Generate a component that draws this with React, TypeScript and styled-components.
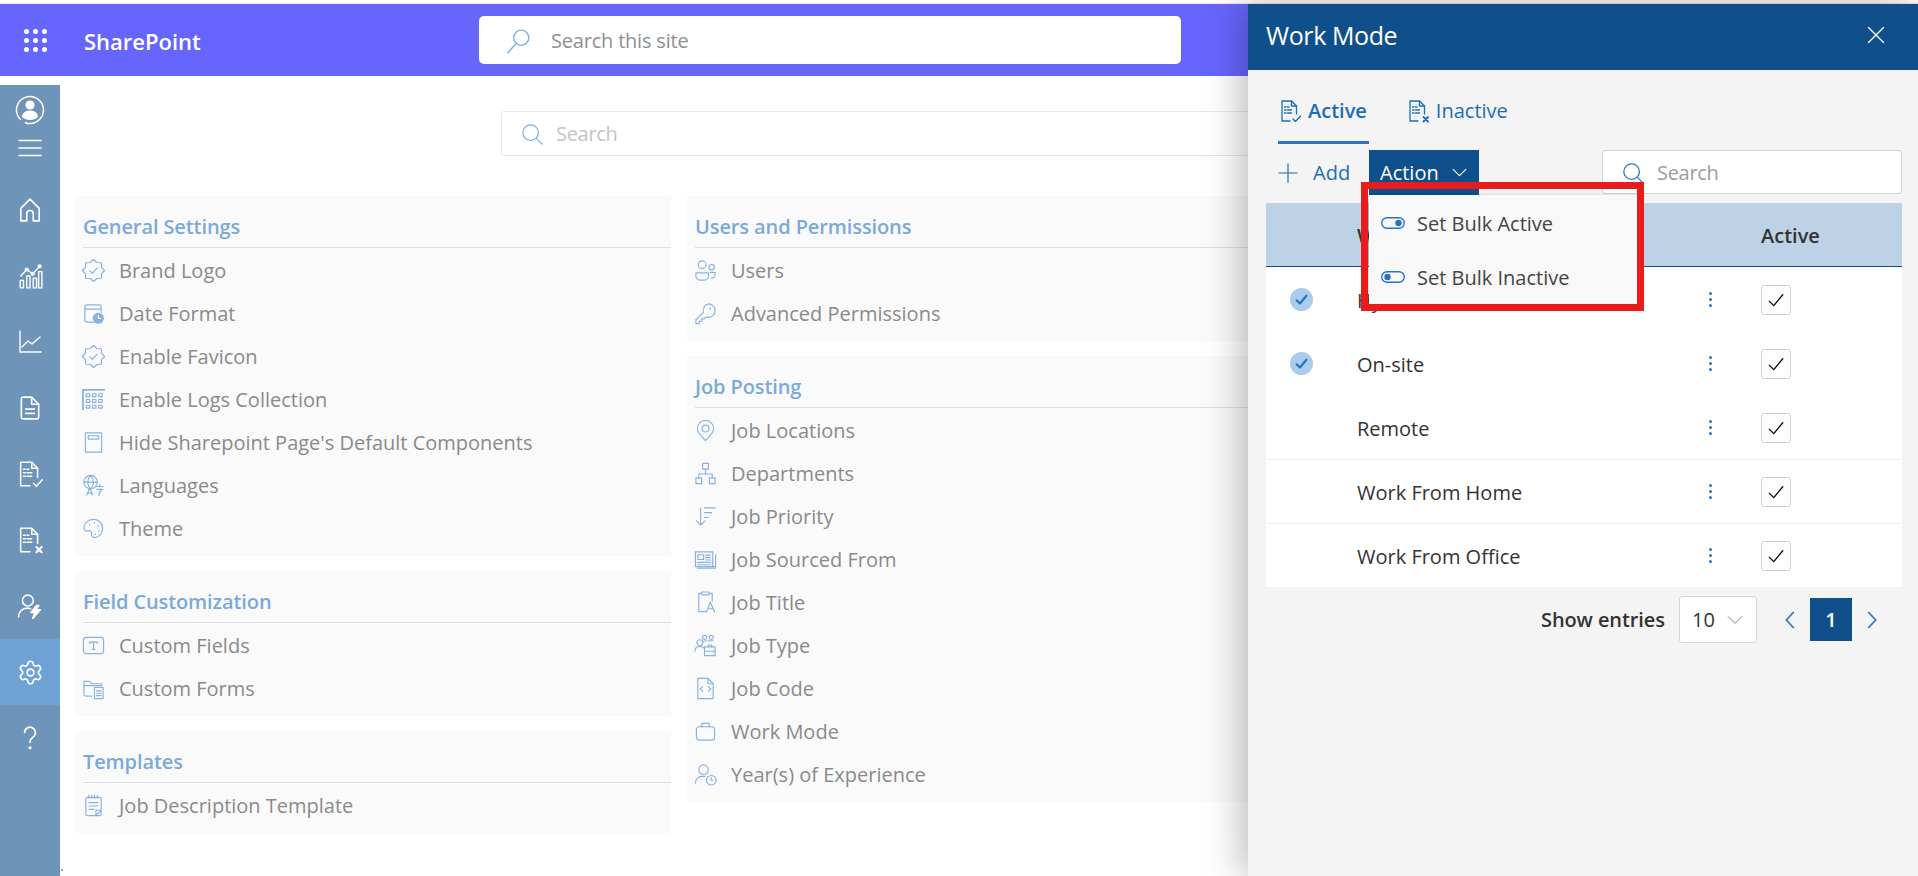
import React from 'react';
import styled, { createGlobalStyle } from 'styled-components';
import { Settings } from 'lucide-react';

const FONT = `"Open Sans", "Noto Sans", "Liberation Sans", sans-serif`;

const Global = createGlobalStyle`
  html, body { margin: 0; padding: 0; background: #fff; }
  body { width: 1918px; height: 876px; overflow: hidden; font-family: ${FONT}; }
  * { box-sizing: border-box; }
`;

const Page = styled.div`
  position: relative;
  width: 1918px;
  height: 876px;
  overflow: hidden;
  display: flex;
  flex-direction: column;
`;
const TopStrip = styled.div`
  height: 4px;
  flex: none;
  background: #fff;
  border-bottom: 1px solid #fbe3dc;
  padding-bottom: 1px;
`;
const SuiteBar = styled.header`
  height: 72px;
  flex: none;
  background: #6666ff;
  display: flex;
  align-items: center;
  padding-left: 24px;
  color: #fff;
`;
const Brand = styled.div`
  margin-left: 37px;
  padding-top: 2px;
  font-size: 22px;
  font-weight: 600;
  width: 395px;
`;
const SiteSearch = styled.div`
  width: 702px;
  height: 48px;
  background: #fff;
  border-radius: 5px;
  display: flex;
  align-items: center;
  padding: 1px 0 0 26px;
  gap: 20px;
  font-size: 20px;
  color: #8f8f8f;
  letter-spacing: -0.2px;
`;
const IconTint = styled.span<{ $color: string }>`
  display: flex;
  color: ${p => p.$color};
`;
const Body = styled.div`
  flex: 1;
  display: flex;
  margin-top: 9px;
  min-height: 0;
`;
const Rail = styled.nav`
  width: 60px;
  flex: none;
  background: #6f94ba;
  color: #fff;
  display: flex;
  flex-direction: column;
`;
const RailTop = styled.div`
  height: 92px;
  flex: none;
  display: flex;
  flex-direction: column;
  align-items: center;
  padding-top: 9px;
  gap: 10px;
`;
const RailItem = styled.div<{ $active?: boolean }>`
  height: 66px;
  flex: none;
  display: flex;
  align-items: center;
  justify-content: center;
  background: ${p => (p.$active ? '#6fa3d6' : 'transparent')};
`;
const Main = styled.main`
  flex: 1;
  padding: 26px 0 0 15px;
  position: relative;
`;
const MainSearch = styled.div`
  width: 968px;
  height: 45px;
  margin-left: 426px;
  border: 1px solid #e6e6e6;
  border-radius: 3px;
  background: #fff;
  display: flex;
  align-items: center;
  padding-left: 19px;
  gap: 13px;
  font-size: 20px;
  color: #c4c4c4;
  letter-spacing: -0.3px;
`;
const Columns = styled.div`
  display: grid;
  grid-template-columns: 596px 596px;
  column-gap: 16px;
  margin-top: 40px;
  align-items: start;
`;
const Column = styled.div`
  display: flex;
  flex-direction: column;
  gap: 15px;
`;
const Card = styled.section`
  background: #fafafa;
  padding: 0 0 6px 8px;
`;
const CardTitle = styled.h3`
  margin: 0 0 1px 0;
  height: 52px;
  padding-top: 17px;
  border-bottom: 1px solid #dedede;
  font-size: 20px;
  line-height: 27px;
  font-weight: 600;
  color: #7aa9da;
  letter-spacing: -0.1px;
`;
const Row = styled.div`
  height: 43px;
  display: flex;
  align-items: center;
  gap: 16px;
  font-size: 20px;
  color: #8a8a8a;
  white-space: nowrap;
`;
const RowIcon = styled.span`
  width: 20px;
  height: 24px;
  flex: none;
  display: flex;
  align-items: center;
  justify-content: center;
  color: #86b2e0;
`;
const Glyph = styled.svg<{ $size?: number }>`
  width: ${p => p.$size ?? 24}px;
  height: ${p => p.$size ?? 24}px;
  flex: none;
  display: block;
  fill: none;
  stroke: currentColor;
  stroke-width: 1.3;
  stroke-linecap: round;
  stroke-linejoin: round;
`;
const Speck = styled.span`
  position: absolute;
  left: 1px;
  bottom: 5px;
  width: 2px;
  height: 2px;
  background: #8aa;
`;

/* Work Mode drawer */
const Drawer = styled.aside`
  position: absolute;
  top: 4px;
  right: 0;
  bottom: 0;
  width: 670px;
  background: #f4f4f4;
  box-shadow: -6px 0 36px rgba(0, 0, 0, 0.28);
  display: flex;
  flex-direction: column;
`;
const DrawerHead = styled.div`
  height: 66px;
  flex: none;
  background: #0f4f8b;
  color: #fff;
  display: flex;
  align-items: center;
  justify-content: space-between;
  padding: 0 33px 4px 18px;
  font-size: 25px;
  letter-spacing: -0.4px;
`;
const Tabs = styled.div`
  display: flex;
  height: 74px;
  flex: none;
  margin-left: 30px;
  gap: 37px;
`;
const Tab = styled.div<{ $active?: boolean }>`
  display: flex;
  align-items: center;
  gap: 6px;
  height: 74px;
  padding: 10px 2px 0 0;
  font-size: 20px;
  font-weight: ${p => (p.$active ? 600 : 400)};
  color: #1c6db8;
  border-bottom: 3px solid ${p => (p.$active ? '#2a73bd' : 'transparent')};
`;
const Toolbar = styled.div`
  position: relative;
  height: 45px;
  flex: none;
  margin: 6px 16px 0 30px;
  display: flex;
  align-items: stretch;
`;
const AddButton = styled.div`
  width: 91px;
  display: flex;
  align-items: center;
  gap: 15px;
  color: #1c6db8;
  font-size: 20px;
`;
const ActionButton = styled.div`
  width: 110px;
  background: #0f4f8b;
  color: #fff;
  display: flex;
  align-items: center;
  gap: 12px;
  padding-left: 11px;
  font-size: 20px;
`;
const PanelSearch = styled.div`
  margin-left: auto;
  width: 300px;
  height: 44px;
  background: #fff;
  border: 1px solid #d6d6d6;
  border-radius: 3px;
  display: flex;
  align-items: center;
  padding: 1px 0 0 19px;
  gap: 13px;
  color: #9c9c9c;
  font-size: 20px;
  letter-spacing: -0.3px;
`;
const ActionMenu = styled.div`
  position: absolute;
  left: 91px;
  top: 45px;
  width: 269px;
  height: 109px;
  background: #f8f8f8;
  box-shadow: 0 2px 6px rgba(0, 0, 0, 0.3);
  z-index: 2;
  padding-top: 1px;
`;
const MenuItem = styled.div`
  height: 54px;
  display: flex;
  align-items: center;
  padding-left: 12px;
  gap: 12px;
  color: #444;
  font-size: 20px;
`;
const Callout = styled.div`
  position: absolute;
  left: 83px;
  top: 32px;
  width: 283px;
  height: 129px;
  border: 7px solid #e81c1c;
  z-index: 3;
`;
const Table = styled.div`
  margin: 8px 16px 0 18px;
  flex: none;
`;
const HeadRow = styled.div`
  height: 64px;
  background: #bdd2e6;
  border-bottom: 1px solid #0f4f8b;
  display: grid;
  grid-template-columns: 91px 404px 1fr;
  align-items: center;
  padding-top: 1px;
  font-size: 20px;
  font-weight: 600;
  color: #333;
`;
const DataRow = styled.div<{ $line?: boolean }>`
  height: 64px;
  background: #fff;
  border-top: 1px solid ${p => (p.$line ? '#f0f0f0' : '#fff')};
  display: grid;
  grid-template-columns: 91px 344px 60px 1fr;
  align-items: center;
  font-size: 20px;
  color: #333;
`;
const ModeName = styled.span`
  padding-top: 2px;
`;
const SelectMark = styled.span`
  justify-self: center;
  margin-left: -20px;
  width: 23px;
  height: 23px;
  border-radius: 50%;
  background: #a9cbec;
  color: #2b74bd;
  display: flex;
  align-items: center;
  justify-content: center;
`;
const MoreDots = styled.span`
  display: flex;
  flex-direction: column;
  gap: 3px;
  width: 3px;
  margin-left: 8px;
  & > i { width: 3px; height: 3px; border-radius: 50%; background: #2a73bd; display: block; }
`;
const CheckBox = styled.span`
  width: 30px;
  height: 30px;
  background: #fff;
  border: 1px solid #cfcfcf;
  border-radius: 3px;
  display: flex;
  align-items: center;
  justify-content: center;
  color: #111;
`;
const Footer = styled.div`
  display: flex;
  align-items: center;
  margin: 9px 0 0 293px;
  height: 47px;
  font-size: 20px;
  color: #333;
`;
const ShowLabel = styled.span`
  font-weight: 600;
  width: 138px;
  white-space: nowrap;
  letter-spacing: -0.1px;
`;
const PageSize = styled.div`
  width: 78px;
  height: 47px;
  background: #fff;
  border: 1px solid #d6d6d6;
  border-radius: 3px;
  display: flex;
  align-items: center;
  padding-left: 12px;
  gap: 11px;
`;
const Pager = styled.div`
  display: flex;
  align-items: center;
  margin-left: 23px;
  color: #2a73bd;
  gap: 10px;
`;
const PageNumber = styled.div`
  width: 42px;
  height: 43px;
  background: #0f4f8b;
  color: #fff;
  display: flex;
  align-items: center;
  justify-content: center;
  font-weight: 600;
`;

const I = ({ size = 24, vb = 24, children, sw }: { size?: number; vb?: number; children: React.ReactNode; sw?: number }) => (
  <Glyph $size={size} viewBox={`0 0 ${vb} ${vb}`} style={sw ? { strokeWidth: sw } : undefined}>{children}</Glyph>
);

const Filled = { fill: 'currentColor', stroke: 'none' } as const;

const serrated = (() => {
  const pts: string[] = [];
  const n = 16;
  for (let i = 0; i < n; i++) {
    const r = i % 2 === 0 ? 11.5 : 9;
    const a = (i / n) * Math.PI * 2 - Math.PI / 2;
    pts.push(`${(12 + r * Math.cos(a)).toFixed(2)},${(12 + r * Math.sin(a)).toFixed(2)}`);
  }
  return pts.join(' ');
})();

const icons: Record<string, React.ReactNode> = {
  badge: <><polygon points={serrated} /><path d="M8 12.200l2.800 2.800 5-5.400" /></>,
  date: <><path d="M12 21H5a2 2 0 0 1-2-2V5a2 2 0 0 1 2-2h13a2 2 0 0 1 2 2v6" /><path d="M3 7.500h17" /><circle cx="17" cy="17" r="5.800" {...Filled} /><path d="M17 14v3.200h2.400" stroke="#fff" /></>,
  grid: <><path d="M1 22.500V2h22.500" strokeWidth="1.800" />{[4.500, 11, 17.500].map(x => [6, 12, 18].map(y => (<rect key={`${x}${y}`} x={x} y={y} width="3.600" height="3" />)))}</>,
  page: <><rect x="3.500" y="2" width="17" height="20" /><rect x="6.500" y="5" width="11" height="3.400" /></>,
  lang: <><circle cx="9" cy="8.500" r="7" /><path d="M2 8.500h14M9 1.500c-4 4-4 10 0 14M9 1.500c4 4 4 10 0 14" /><path d="M5 22l3-7.500 3 7.500M6 20h4" /><path d="M15 13h7M18.500 11v2M15.500 16h6l-3 2.500v3l-1.500.5" /></>,
  palette: <><path d="M12 2.500C6.500 2.500 2 6.500 2 11.500c0 2.500 1.800 3.500 3.500 3 2.800-.9 5 .5 4.500 3-.3 2 .8 4 3 4 4.500 0 8.500-4.500 8.500-9.500 0-5.500-4-9.500-9.500-9.500z" /><circle cx="8" cy="8" r=".8" {...Filled} /><circle cx="13" cy="6" r=".8" {...Filled} /><circle cx="17" cy="9.500" r=".8" {...Filled} /><circle cx="17.500" cy="14.500" r=".8" {...Filled} /><circle cx="14" cy="18" r=".8" {...Filled} /></>,
  textbox: <><rect x="1.500" y="3.500" width="21" height="17" rx="3" /><path d="M8 8.500h8M12 8.500v7.500M10.500 16h3M8 8.500v1.300M16 8.500v1.300" /></>,
  form: <><path d="M10 20H4a2 2 0 0 1-2-2V4.500h6l2 2.500h10.500v2" /><path d="M2 9h18" /><rect x="13" y="11" width="9" height="11.500" /><path d="M15 14.500h5M15 17h5M15 19.500h5" /></>,
  note: <><rect x="4" y="3.500" width="16" height="19" rx="2" /><path d="M7 1.500v3M10 1.500v3M13 1.500v3M16 1.500v3M7.500 9h9M7.500 12.500h9M7.500 16h5M14.500 22.500l5.500-5.500h-5.500z" /></>,
  users: <><circle cx="8.500" cy="6" r="4" /><circle cx="18.500" cy="8.500" r="2.800" /><path d="M2 14.500h13v3.500a4 4 0 0 1-4 4H6a4 4 0 0 1-4-4z" /><path d="M17 14h5v2a4 4 0 0 1-4 4" /></>,
  key: <><path d="M15 2a7 7 0 0 1 0 14c-.9 0-1.700-.2-2.500-.4l-2 2H8v2.500H5.500V22.500H2v-4l7.900-8a7 7 0 0 1 5.100-8.500z" /><circle cx="17" cy="7" r="1" {...Filled} /></>,
  pin: <><path d="M12 22.500c-4-4-8.500-8-8.500-12.500a8.500 8.500 0 0 1 17 0c0 4.500-4.500 8.500-8.500 12.500z" /><circle cx="12" cy="10" r="3.600" /></>,
  org: <><rect x="9" y="1.500" width="6" height="6" /><rect x="2" y="16.500" width="6" height="6" /><rect x="16" y="16.500" width="6" height="6" /><path d="M12 7.500v5M5 16.500v-4h14v4" /></>,
  priority: <><path d="M7 3v18M2.500 16.500L7 21l4.500-4.500M11 3h11M11 8h7.500M11 13h4" /></>,
  news: <><path d="M1.500 4h18v15.500h3V7" /><path d="M1.500 4v15.500h18" /><rect x="4" y="7" width="6" height="5" /><path d="M12 7.500h5M12 10h5M12 12.500h5M4 15h13M4 17.500h13M22.500 21h-19" /></>,
  clip: <><path d="M8 2.500H5v19h7" /><path d="M16 2.500h3v8" /><rect x="8" y="1" width="8" height="3" rx="1" /><path d="M13 22l4-10.500L21.500 22M14.500 18.500h5.500" /></>,
  team: <><circle cx="11" cy="3.500" r="2.200" /><circle cx="18" cy="3.500" r="2.200" /><circle cx="6" cy="9" r="3" /><path d="M1 18c0-3 2-5 5-5s3 .5 4 1.500M9 8.500c1-1.500 3-1.500 4.500-1.500M15 7h5" /><rect x="11" y="13.500" width="11" height="9" /><path d="M11 18h11M15 13.500v-2h3.500v2" /></>,
  code: <><path d="M14.500 1.500H4v21h16V7z" /><path d="M14.500 1.500V7H20" /><path d="M9 10l-2.500 2.500L9 15M15 10l2.500 2.500L15 15" /></>,
  case: <><rect x="2.500" y="7" width="19" height="14" rx="3" /><path d="M8 7V4.500a1 1 0 0 1 1-1h6a1 1 0 0 1 1 1V7" /></>,
  userclock: <><circle cx="10" cy="7" r="5" /><path d="M1.500 21c0-4.500 3-7 7-7h3" /><circle cx="18" cy="18" r="5" /><path d="M18 15.500V18h2.200" /></>,
};

const sections: { title: string; rows: [string, string][] }[][] = [
  [
    { title: 'General Settings', rows: [['badge', 'Brand Logo'], ['date', 'Date Format'], ['badge', 'Enable Favicon'], ['grid', 'Enable Logs Collection'], ['page', "Hide Sharepoint Page's Default Components"], ['lang', 'Languages'], ['palette', 'Theme']] },
    { title: 'Field Customization', rows: [['textbox', 'Custom Fields'], ['form', 'Custom Forms']] },
    { title: 'Templates', rows: [['note', 'Job Description Template']] },
  ],
  [
    { title: 'Users and Permissions', rows: [['users', 'Users'], ['key', 'Advanced Permissions']] },
    { title: 'Job Posting', rows: [['pin', 'Job Locations'], ['org', 'Departments'], ['priority', 'Job Priority'], ['news', 'Job Sourced From'], ['clip', 'Job Title'], ['team', 'Job Type'], ['code', 'Job Code'], ['case', 'Work Mode'], ['userclock', 'Year(s) of Experience']] },
  ],
];

const Waffle = () => (
  <Glyph $size={23} viewBox="0 0 23 23" style={{ stroke: 'none', fill: '#fff' }}>
    {[2.500, 11.500, 20.500].map(x => [2.500, 11.500, 20.500].map(y => <circle key={`${x}-${y}`} cx={x} cy={y} r="2.500" />))}
  </Glyph>
);
const Loupe = () => (
  <I size={26} sw={1.300}><circle cx="15" cy="9" r="7" /><path d="M10 14.500L2.500 23" /></I>
);
const Search = ({ size = 22 }: { size?: number }) => (
  <I size={size} sw={1.400}><circle cx="10.500" cy="10.500" r="8.500" /><path d="M16.800 16.800L23 23" /></I>
);
const Chevron = ({ size = 14, sw = 1.800 }: { size?: number; sw?: number }) => (
  <I size={size} sw={sw}><path d="M3 7.500l9 9 9-9" /></I>
);
const Plus = () => (<I size={20} sw={1.400}><path d="M12 1v22M1 12h22" /></I>);
const Tick = ({ size = 18, sw = 1.800 }: { size?: number; sw?: number }) => (
  <I size={size} sw={sw}><path d="M3 13.500l6 6L21 5" /></I>
);
const ListDoc = ({ size = 24, mark }: { size?: number; mark: 'check' | 'x' }) => (
  <I size={size} sw={1.300}>
    <path d="M12 22H4V2h9.500l5 5v8" /><path d="M13.500 2v5h5" />
    <path d="M6.500 8h1.500M9.500 8h1.500M6.500 11h1.500M9.500 11h4M6.500 14h1.500M9.500 14h4" />
    {mark === 'check' ? <path d="M15 20l2.500 2.500 5-5.500" /> : <path d="M17.500 18l4.500 4.500M22 18l-4.500 4.500" strokeWidth="1.800" />}
  </I>
);
const Toggle = ({ on }: { on: boolean }) => (
  <Glyph $size={24} viewBox="0 0 24 12" style={{ height: 12, color: '#2a73bd', strokeWidth: 1.400 }}>
    <rect x=".700" y=".700" width="22.600" height="10.600" rx="5.300" />
    <circle cx={on ? 17.500 : 6.500} cy="6" r="3.200" fill="currentColor" stroke="none" />
  </Glyph>
);

const railIcons: React.ReactNode[] = [
  <I size={26} sw={1.500}><path d="M3.500 22V10.500L12 2l8.500 8.500V22h-5.500v-6.500a3 3 0 0 0-6 0V22z" /></I>,
  <I size={26} sw={1.300}><path d="M3 23v-7h3v7zM9 23V12h3v11zM15 23v-9h3v9zM20 23V8h3v15z" /><path d="M3.500 12L9 6l5.500 4L21 3" /><circle cx="9" cy="6" r="1.300" /><circle cx="14.500" cy="10" r="1.300" /><circle cx="21" cy="3" r="1.300" /></I>,
  <I size={24} sw={1.400}><path d="M2 1v21h21" /><path d="M4 17l6-6 4 3 8-7" /></I>,
  <I size={26} sw={1.500}><path d="M13.500 2H6a2 2 0 0 0-2 2v16a2 2 0 0 0 2 2h12a2 2 0 0 0 2-2V8.500z" /><path d="M13.500 2v6.500H20M8 13h8M8 17h8" /></I>,
  <ListDoc size={28} mark="check" />,
  <ListDoc size={28} mark="x" />,
  <I size={26} sw={1.500}><circle cx="10" cy="7" r="5" /><path d="M1.500 22c0-5 3.500-8 8-8 1 0 2 .2 3 .5" /><path d="M18 11.500l-5 6.500h3.500l-2 5.500 7-8h-4l2.500-4z" fill="currentColor" /></I>,
  <Settings size={27} strokeWidth={1.500} />,
  <I size={26} sw={1.500}><path d="M7 7a5 5 0 1 1 8 4c-2 1.500-3 2.500-3 5" /><circle cx="12" cy="21" r=".7" fill="currentColor" /></I>,
];

const workModes: { name: string; selected?: boolean; line?: boolean }[] = [
  { name: 'Hybrid', selected: true },
  { name: 'On-site', selected: true },
  { name: 'Remote' },
  { name: 'Work From Home', line: true },
  { name: 'Work From Office', line: true },
];

export default function App() {
  return (
    <Page>
      <Global />
      <TopStrip />
      <SuiteBar>
        <Waffle />
        <Brand>SharePoint</Brand>
        <SiteSearch>
          <IconTint $color="#7fb0df"><Loupe /></IconTint>
          Search this site
        </SiteSearch>
      </SuiteBar>
      <Body>
        <Rail>
          <RailTop>
            <I size={32} vb={32} sw={1.500}>
              <path d="M6.450 25.550A13.500 13.500 0 1 1 11.400 28.700" />
              <circle cx="16" cy="11" r="4.600" fill="currentColor" stroke="none" />
              <path d="M8 23c0-4 3.500-6.500 8-6.500s8 2.500 8 6.500c-2 2-5 3-8 3s-6-1-8-3z" fill="currentColor" stroke="none" />
            </I>
            <I size={24} sw={1.500}><path d="M1 4.500h22M1 12h22M1 19.500h22" /></I>
          </RailTop>
          {railIcons.map((ic, i) => (
            <RailItem key={i} $active={i === 7}>{ic}</RailItem>
          ))}
        </Rail>
        <Main>
          <Speck />
          <MainSearch>
            <IconTint $color="#7fb0df"><Search size={22} /></IconTint>
            Search
          </MainSearch>
          <Columns>
            {sections.map((col, c) => (
              <Column key={c}>
                {col.map(sec => (
                  <Card key={sec.title}>
                    <CardTitle>{sec.title}</CardTitle>
                    {sec.rows.map(([ic, label]) => (
                      <Row key={label}>
                        <RowIcon><I size={23} sw={1.200}>{icons[ic]}</I></RowIcon>
                        <span>{label}</span>
                      </Row>
                    ))}
                  </Card>
                ))}
              </Column>
            ))}
          </Columns>
        </Main>
      </Body>
      <Drawer>
        <DrawerHead>
          Work Mode
          <I size={18} sw={1.800}><path d="M2 2l20 20M22 2L2 22" /></I>
        </DrawerHead>
        <Tabs>
          <Tab $active><ListDoc size={24} mark="check" />Active</Tab>
          <Tab><ListDoc size={24} mark="x" />Inactive</Tab>
        </Tabs>
        <Toolbar>
          <AddButton><Plus />Add</AddButton>
          <ActionButton>Action <Chevron size={17} sw={1.500} /></ActionButton>
          <PanelSearch>
            <IconTint $color="#2a73bd"><Search size={22} /></IconTint>
            Search
          </PanelSearch>
          <ActionMenu>
            <MenuItem><Toggle on />Set Bulk Active</MenuItem>
            <MenuItem><Toggle on={false} />Set Bulk Inactive</MenuItem>
          </ActionMenu>
          <Callout />
        </Toolbar>
        <Table>
          <HeadRow><span /><span>Work Mode</span><span>Active</span></HeadRow>
          {workModes.map(m => (
            <DataRow key={m.name} $line={m.line}>
              {m.selected ? <SelectMark><Tick size={13} sw={4} /></SelectMark> : <span />}
              <ModeName>{m.name}</ModeName>
              <MoreDots><i /><i /><i /></MoreDots>
              <CheckBox><Tick size={18} /></CheckBox>
            </DataRow>
          ))}
        </Table>
        <Footer>
          <ShowLabel>Show entries</ShowLabel>
          <PageSize>10 <IconTint $color="#777"><Chevron size={18} sw={1.200} /></IconTint></PageSize>
          <Pager>
            <I size={20} sw={2}><path d="M16 3l-8.500 9 8.500 9" /></I>
            <PageNumber>1</PageNumber>
            <I size={20} sw={2}><path d="M8 3l8.500 9-8.500 9" /></I>
          </Pager>
        </Footer>
      </Drawer>
    </Page>
  );
}
